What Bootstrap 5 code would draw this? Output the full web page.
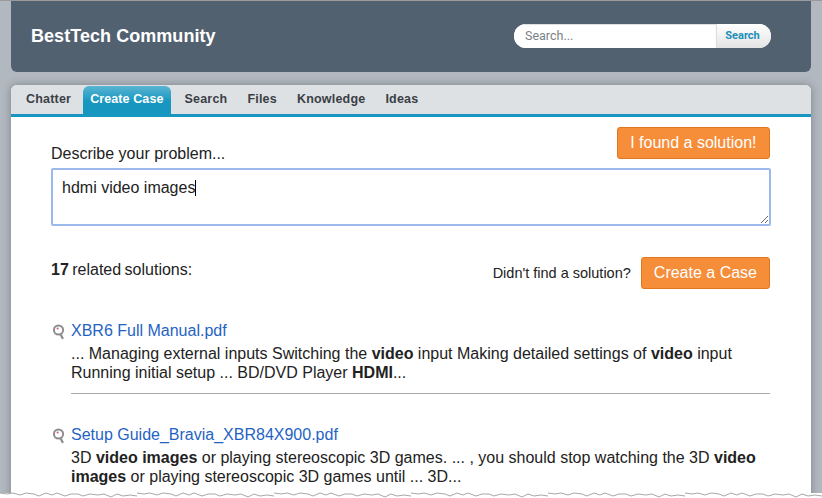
<!DOCTYPE html>
<html lang="en">
<head>
<meta charset="utf-8">
<title>BestTech Community</title>
<link href="https://cdn.jsdelivr.net/npm/bootstrap@5.3.0/dist/css/bootstrap.min.css" rel="stylesheet">
<style>
html, body { height: 498px; overflow: hidden; }
body { background: #fff; font-family: "Liberation Sans", Arial, sans-serif; color: #222; font-size: 16px; line-height: 18px; }
.stage { height: 498px; background: #b2b8bf; padding: 0 11px; border-top: 1px solid #9a9a9a; position: relative; overflow: hidden; }
.site-head { height: 71px; background: #526170; border-radius: 0 0 6px 6px; padding: 0 40px 2px 20px; }
.site-title { color: #fff; font-weight: 700; font-size: 18px; line-height: 22px; margin: 0; letter-spacing: .05px; }
.head-search { width: 257px; height: 24px; border-radius: 12px; overflow: hidden; background: #fff; }
.head-search input { flex: 1; min-width: 0; border: 0; outline: 0; padding: 0 11px; font: 12.5px "Roboto", sans-serif; color: #444; box-shadow: inset 0 1px 1px #ddd; }
.head-search input::placeholder { color: #7a7f85; opacity: 1; }
.head-search button { width: 55px; border: 0; border-left: 1px solid #ddd; padding: 0 3px 0 0; background: linear-gradient(#fff, #e4e4e4); color: #1a8fb9; font: 700 11px "Roboto", sans-serif; }
.case-panel { margin-top: 13px; background: #fff; border-radius: 6px 6px 0 0; height: 420px; box-shadow: 0 0 9px rgba(60,65,72,.45); }
.tab-strip { height: 32px; background: #dee1e4; border-bottom: 3px solid #1797c0; border-radius: 6px 6px 0 0; padding: 1px 0 0 5px; }
.tab-item { font-weight: 700; font-size: 12.5px; line-height: 27px; padding: 0 10px; color: #3a3f46; text-decoration: none; letter-spacing: .2px; }
.tab-item.current { color: #fff; background: linear-gradient(#5ab4d2, #1797c0 55%); border-radius: 6px 6px 0 0; padding: 0 7px; margin: 0 4px 0 2px; letter-spacing: .1px; }
.case-body { padding: 10px 41px 0 40px; }
.orange-btn { background: #f68d39; border: 1px solid #e2761c; border-radius: 3px; color: #fff; font-size: 16px; line-height: 18px; padding: 5px 12.5px; height: 32px; }
.case-btn { padding: 5px 12px; }
.top-row { height: 36px; }
.problem-box-wrap { margin-top: 5px; }
.problem-box { display: block; width: 720px; height: 58px; border: 2px solid #9bb9ec; border-radius: 2px; padding: 9px 9px; font: 16px/18px "Liberation Sans", Arial, sans-serif; color: #222; outline: 0; }
.fake-caret { position: absolute; left: 144px; top: 12px; width: 1px; height: 16px; background: #000; }
.count-row { margin-top: 31px; height: 32px; }
.count-text { margin-top: 4px; word-spacing: -1px; }
.didnt-find { font-size: 14.5px; margin-right: 2px; }
.sol-link { color: #1f63c4; text-decoration: none; line-height: 20px; display: block; }
.sol-item { padding-left: 20px; position: relative; }
.sol-icon { position: absolute; left: 1px; top: 3px; width: 14px; height: 16px; }
.sol-text { margin: 3px 0 0; line-height: 19px; }
.sol-rule { margin: 11px 0 0; border: 0; border-top: 1px solid #aaa; opacity: 1; }
.first-sol { margin-top: 32px; }
.next-sol { margin-top: 31px; }
.torn-edge { position: absolute; left: 0; bottom: 0; width: 822px; height: 7px; z-index: 3; }
</style>
</head>
<body>
<div class="stage">
  <div class="site-head d-flex align-items-center justify-content-between">
    <h1 class="site-title">BestTech Community</h1>
    <form class="head-search d-flex">
      <input type="text" placeholder="Search...">
      <button type="button">Search</button>
    </form>
  </div>

  <div class="case-panel position-relative">
    <nav class="tab-strip d-flex">
      <a class="tab-item" href="#">Chatter</a>
      <a class="tab-item current" href="#">Create Case</a>
      <a class="tab-item" href="#">Search</a>
      <a class="tab-item" href="#">Files</a>
      <a class="tab-item" href="#">Knowledge</a>
      <a class="tab-item" href="#">Ideas</a>
    </nav>
    <div class="case-body">
      <div class="top-row d-flex justify-content-between align-items-end">
        <div>Describe your problem...</div>
        <button type="button" class="orange-btn align-self-start">I found a solution!</button>
      </div>
      <div class="problem-box-wrap position-relative">
        <textarea class="problem-box">hdmi video images</textarea>
        <span class="fake-caret"></span>
      </div>
      <div class="count-row d-flex justify-content-between align-items-start">
        <div class="count-text"><b>17</b> related solutions:</div>
        <div class="d-flex align-items-center gap-2">
          <span class="didnt-find">Didn't find a solution?</span>
          <button type="button" class="orange-btn case-btn">Create a Case</button>
        </div>
      </div>

      <div class="sol-item first-sol">
        <svg class="sol-icon" viewBox="0 0 14 16"><circle cx="6.5" cy="6" r="4.6" fill="#fff" stroke="#8e8e8e" stroke-width="2"/><circle cx="5.6" cy="4.6" r="1" fill="#e0506a"/><path d="M8.6 10.5l2 3.6" stroke="#8e8e8e" stroke-width="2.2" stroke-linecap="round"/></svg>
        <a class="sol-link" href="#">XBR6 Full Manual.pdf</a>
        <p class="sol-text">... Managing external inputs Switching the <b>video</b> input Making detailed settings of <b>video</b> input Running initial setup ... BD/DVD Player <b>HDMI</b>...</p>
        <hr class="sol-rule">
      </div>

      <div class="sol-item next-sol">
        <svg class="sol-icon" viewBox="0 0 14 16"><circle cx="6.5" cy="6" r="4.6" fill="#fff" stroke="#8e8e8e" stroke-width="2"/><circle cx="5.6" cy="4.6" r="1" fill="#e0506a"/><path d="M8.6 10.5l2 3.6" stroke="#8e8e8e" stroke-width="2.2" stroke-linecap="round"/></svg>
        <a class="sol-link" href="#">Setup Guide_Bravia_XBR84X900.pdf</a>
        <p class="sol-text">3D <b>video images</b> or playing stereoscopic 3D games. ... , you should stop watching the 3D <b>video images</b> or playing stereoscopic 3D games until ... 3D...</p>
      </div>
    </div>
  </div>

  <svg class="torn-edge" viewBox="0 0 822 7" preserveAspectRatio="none">
    <defs><path id="tear" d="M0 2l7 1 6-1 7 2 6-2 8 1 5 2 7-3 6 2 5-2 8 3 6-2 7 0 5 2 7-2 8 1 6-1 7 3 6-3 6 2 7-1 7 1"/></defs>
    <rect y="2" width="822" height="5" fill="#fff"/>
    <g fill="#fff" stroke="#a8a8a8" stroke-width="1">
      <use href="#tear"/><use href="#tear" x="137"/><use href="#tear" x="274"/><use href="#tear" x="411"/><use href="#tear" x="548"/><use href="#tear" x="685"/>
    </g>
  </svg>
</div>
<script src="https://cdn.jsdelivr.net/npm/bootstrap@5.3.0/dist/js/bootstrap.bundle.min.js"></script>
</body>
</html>
